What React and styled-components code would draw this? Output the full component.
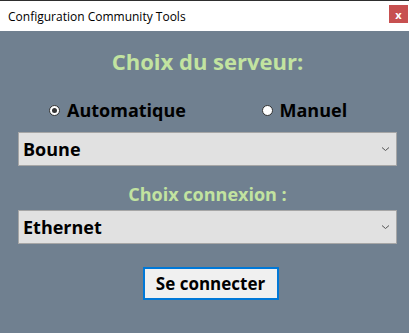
import React, { useState } from 'react';
import styled, { createGlobalStyle } from 'styled-components';

const GlobalStyle = createGlobalStyle`
  html, body {
    margin: 0;
    padding: 0;
    background: #708090;
  }
`;

const Window = styled.div`
  width: 409px;
  height: 333px;
  display: flex;
  flex-direction: column;
  background: #708090;
  border-top: 1px solid #2e2e2e;
  box-sizing: border-box;
  font-family: 'Open Sans', 'Noto Sans', sans-serif;
`;

const TitleBar = styled.div`
  height: 30px;
  background: #ffffff;
  display: flex;
  align-items: center;
  justify-content: space-between;
  padding-left: 8px;
`;

const Title = styled.span`
  font-size: 12px;
  color: #000;
`;

const CloseButton = styled.div`
  width: 19px;
  height: 18px;
  margin-right: 1px;
  margin-top: -4px;
  background: #c75050;
  color: #fff;
  font-size: 11px;
  font-weight: bold;
  display: flex;
  align-items: center;
  justify-content: center;
`;

const Content = styled.div`
  display: flex;
  flex-direction: column;
  align-items: center;
  padding: 0 12px 0 18px;
`;

const Heading = styled.div`
  color: ${p => p.color || '#c2e3a0'};
  font-family: 'Open Sans', sans-serif;
  font-weight: bold;
  font-size: ${p => p.size}px;
  margin-top: ${p => p.top}px;
  line-height: 1.2;
`;

const RadioRow = styled.div`
  align-self: stretch;
  display: grid;
  grid-template-columns: 1fr 1fr;
  margin-top: 24px;
`;

const RadioLabel = styled.label`
  display: flex;
  align-items: center;
  gap: 7px;
  padding-left: ${p => p.indent}px;
  font-weight: bold;
  font-size: 18px;
  color: #000;
  cursor: pointer;
`;

const RadioDot = styled.span`
  width: 11px;
  height: 11px;
  border-radius: 50%;
  background: #fff;
  border: 1px solid #333;
  box-sizing: border-box;
  display: flex;
  align-items: center;
  justify-content: center;
  &::after {
    content: '';
    width: 5px;
    height: 5px;
    border-radius: 50%;
    background: ${p => (p.checked ? '#333' : 'transparent')};
  }
`;

const Select = styled.div`
  align-self: stretch;
  height: 34px;
  margin-top: ${p => p.top}px;
  background: #e1e1e1;
  border: 1px solid #a6a6a6;
  box-sizing: border-box;
  display: flex;
  align-items: center;
  justify-content: space-between;
  padding: 0 6px 0 4px;
  font-weight: bold;
  font-size: 18px;
  color: #000;
`;

const Chevron = () => (
  <svg width="9" height="6" viewBox="0 0 9 6">
    <path d="M1 1.5 L4.5 4.5 L8 1.5" fill="none" stroke="#555" strokeWidth="1" />
  </svg>
);

const ConnectButton = styled.button`
  margin-top: 23px;
  margin-left: 6px;
  width: 136px;
  height: 33px;
  background: #f0f0f0;
  border: 2px solid #0078d7;
  font-family: 'Open Sans', sans-serif;
  font-weight: bold;
  font-size: 17px;
  color: #000;
  padding: 0;
`;

const App = () => {
  const [mode, setMode] = useState('auto');
  return (
    <>
      <GlobalStyle />
      <Window>
        <TitleBar>
          <Title>Configuration Community Tools</Title>
          <CloseButton>x</CloseButton>
        </TitleBar>
        <Content>
          <Heading size={22} top={17}>Choix du serveur:</Heading>
          <RadioRow>
            <RadioLabel indent={31} onClick={() => setMode('auto')}>
              <RadioDot checked={mode === 'auto'} />
              Automatique
            </RadioLabel>
            <RadioLabel indent={54} onClick={() => setMode('manuel')}>
              <RadioDot checked={mode === 'manuel'} />
              Manuel
            </RadioLabel>
          </RadioRow>
          <Select top={10}>
            Boune
            <Chevron />
          </Select>
          <Heading size={18} top={18}>Choix connexion :</Heading>
          <Select top={4}>
            Ethernet
            <Chevron />
          </Select>
          <ConnectButton>Se connecter</ConnectButton>
        </Content>
      </Window>
    </>
  );
};

export default App;
